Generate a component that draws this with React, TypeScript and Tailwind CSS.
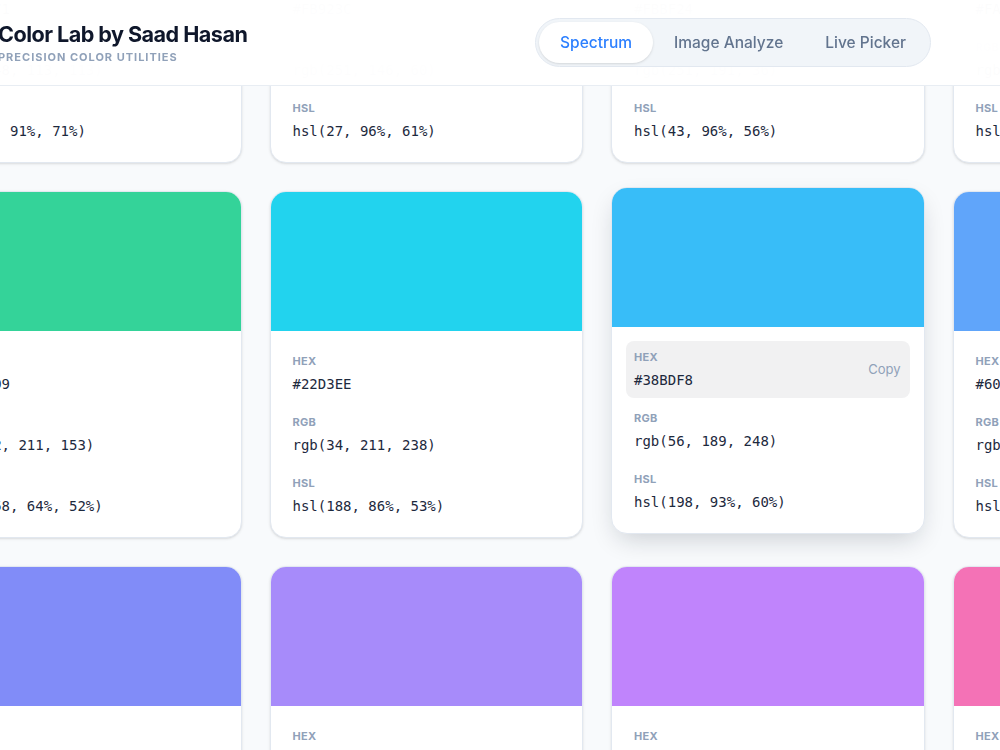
import React from "react";

const PALETTE = [
  "#F87171",
  "#FB923C",
  "#FBBF24",
  "#FACC15",
  "#34D399",
  "#22D3EE",
  "#38BDF8",
  "#60A5FA",
  "#818CF8",
  "#A78BFA",
  "#C084FC",
  "#F472B6",
];

// index of the card the pointer rests on in the shot
const HOVERED = 6;

function toRgb(hex: string) {
  const n = parseInt(hex.slice(1), 16);
  return [(n >> 16) & 255, (n >> 8) & 255, n & 255];
}

function toHsl([r, g, b]: number[]) {
  const rn = r / 255;
  const gn = g / 255;
  const bn = b / 255;
  const max = Math.max(rn, gn, bn);
  const min = Math.min(rn, gn, bn);
  const l = (max + min) / 2;
  let h = 0;
  let s = 0;
  if (max !== min) {
    const d = max - min;
    s = l > 0.5 ? d / (2 - max - min) : d / (max + min);
    if (max === rn) h = (gn - bn) / d + (gn < bn ? 6 : 0);
    else if (max === gn) h = (bn - rn) / d + 2;
    else h = (rn - gn) / d + 4;
    h *= 60;
  }
  return [Math.round(h), Math.round(s * 100), Math.round(l * 100)];
}

function ValueRow({
  label,
  value,
  active,
}: {
  label: string;
  value: string;
  active?: boolean;
}) {
  return (
    <div
      className={`flex items-center justify-between rounded-lg px-2 py-2 ${
        active ? "bg-[#f1f1f2]" : ""
      }`}
    >
      <div>
        <div className="text-[11px] font-bold uppercase leading-4 tracking-wide text-slate-400">
          {label}
        </div>
        <div className="mt-[5px] font-['DejaVu_Sans_Mono',monospace] text-[14px] leading-5 text-slate-800">
          {value}
        </div>
      </div>
      {active && (
        <span className="pr-px text-[13px] text-slate-400">Copy</span>
      )}
    </div>
  );
}

function ColorCard({ hex, hovered }: { hex: string; hovered: boolean }) {
  const rgb = toRgb(hex);
  const [h, s, l] = toHsl(rgb);

  return (
    <div
      className={`overflow-hidden rounded-2xl border border-slate-200 bg-white ${
        hovered
          ? "-translate-y-1 shadow-[0_10px_26px_-6px_rgba(15,23,42,0.2)]"
          : "shadow-sm"
      }`}
    >
      <div className="h-[139px]" style={{ backgroundColor: hex }} />
      <div className="flex flex-col gap-1 px-3.5 pb-[13px] pt-3.5">
        <ValueRow label="Hex" value={hex} active={hovered} />
        <ValueRow label="Rgb" value={`rgb(${rgb.join(", ")})`} />
        <ValueRow label="Hsl" value={`hsl(${h}, ${s}%, ${l}%)`} />
      </div>
    </div>
  );
}

const TABS = ["Spectrum", "Image Analyze", "Live Picker"];

export default function App() {
  return (
    <div className="relative h-[750px] w-[1000px] overflow-hidden bg-slate-50 font-['Inter',sans-serif]">
      {/* Palette grid, scrolled so the first row sits under the header */}
      <main className="-ml-[72px] -mt-[184px] grid w-[1338px] grid-cols-4 gap-7">
        {PALETTE.map((hex, i) => (
          <ColorCard key={hex} hex={hex} hovered={i === HOVERED} />
        ))}
      </main>

      {/* Sticky header */}
      <header className="absolute inset-x-0 top-0 z-10 flex h-[86px] items-center border-b border-slate-200/80 bg-white/[0.98] backdrop-blur-2xl">
        <div className="-ml-[2px] -mt-[2px]">
          <h1 className="text-[21.6px] font-bold leading-8 tracking-tight text-slate-900">
            Color Lab by Saad Hasan
          </h1>
          <p className="-mt-px text-[11px] font-bold uppercase leading-4 tracking-[0.09em] text-slate-400">
            Precision Color Utilities
          </p>
        </div>

        <nav className="ml-auto mr-[69px] flex rounded-full border border-slate-200 bg-slate-100 p-[3px]">
          {TABS.map((tab, i) => (
            <button
              key={tab}
              type="button"
              className={`flex h-[41px] items-center rounded-full px-[21px] text-[15.5px] font-medium ${
                i === 0
                  ? "bg-white text-blue-500 shadow-sm"
                  : "text-slate-500"
              }`}
            >
              {tab}
            </button>
          ))}
        </nav>
      </header>
    </div>
  );
}
